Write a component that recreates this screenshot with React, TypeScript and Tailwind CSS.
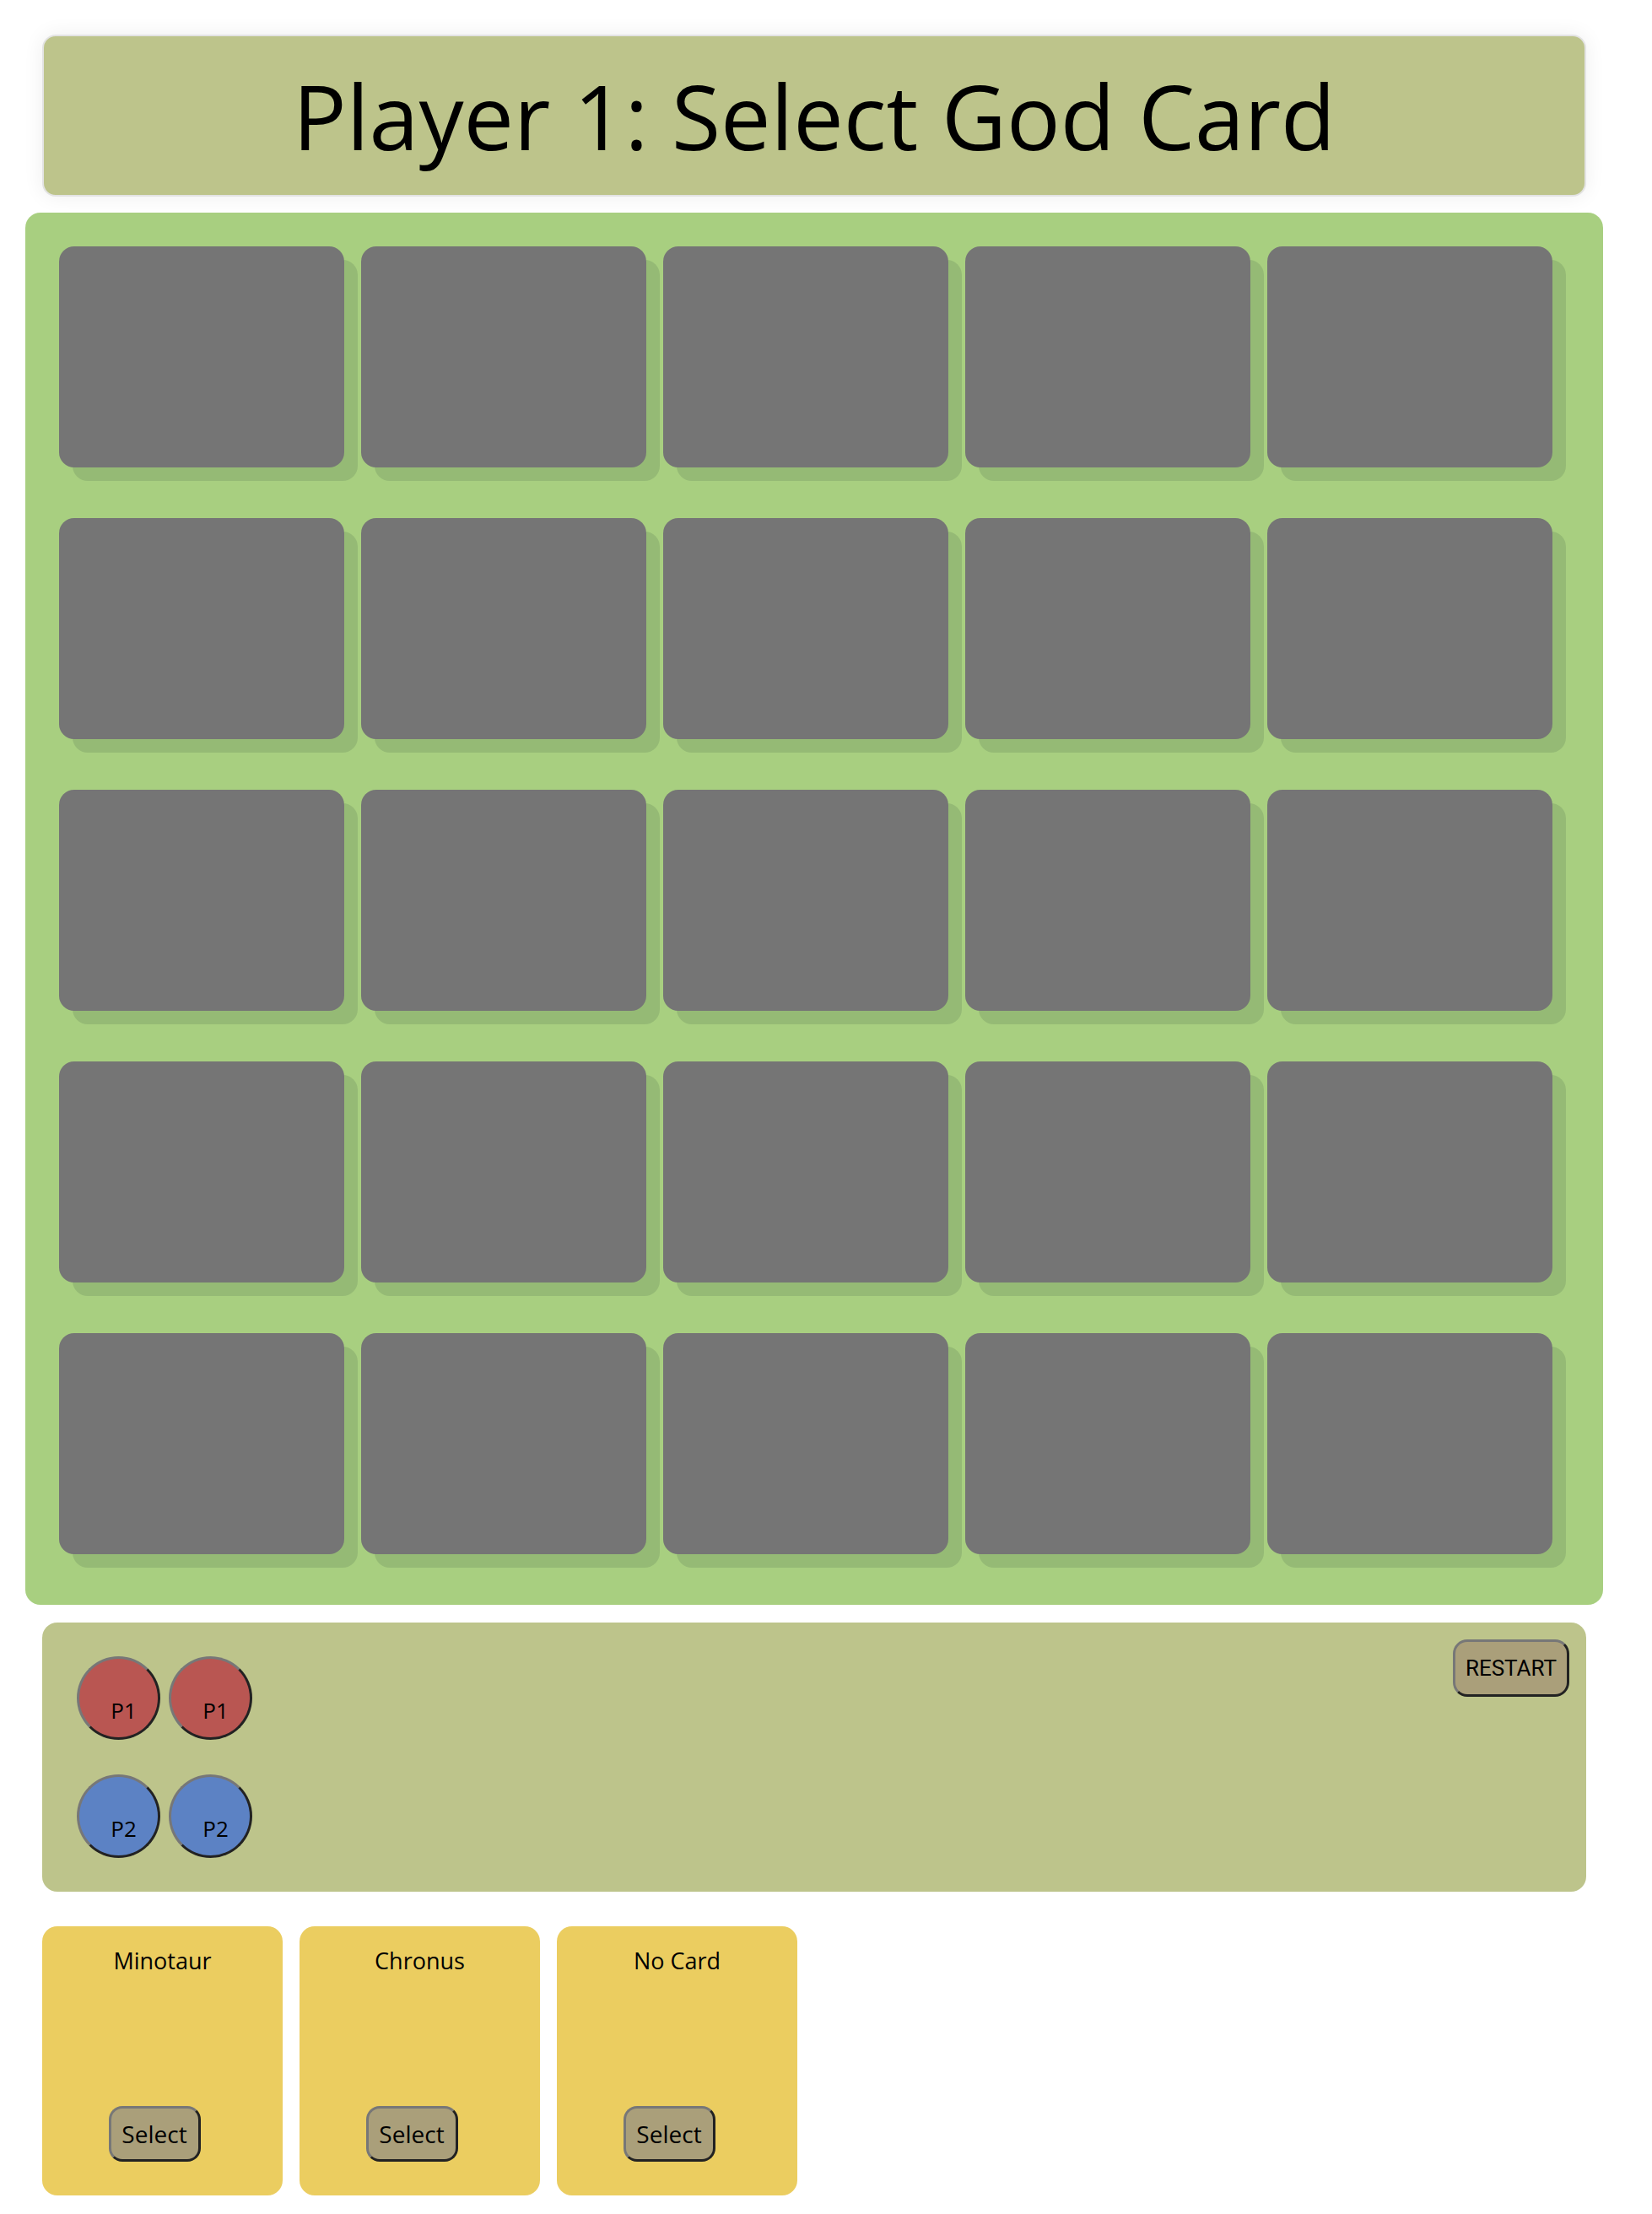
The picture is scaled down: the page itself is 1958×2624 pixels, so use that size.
import React from "react";

const tiles = Array.from({ length: 25 }, (_, i) => i);

function Pawn({ label, color }: { label: string; color: string }) {
  return (
    <div
      className={`w-[99px] h-[99px] rounded-full border-[3px] border-t-[#777777] border-l-[#777777] border-b-[#222222] border-r-[#222222] flex items-center justify-center pl-[12px] pt-[29px] ${color}`}
    >
      <span className="text-[26px] leading-none text-black">{label}</span>
    </div>
  );
}

function GodCard({ name }: { name: string }) {
  return (
    <div className="w-[285px] h-[319px] rounded-[18px] bg-[#ebcd60] flex flex-col items-center justify-between pt-[21px] pb-[40px]">
      <div className="text-[27px] text-black">{name}</div>
      <button className="mr-[19px] w-[109px] h-[66px] rounded-[16px] bg-[#aa9f7a] border-[3px] border-t-[#777777] border-l-[#777777] border-b-[#222222] border-r-[#222222] flex items-center justify-center text-[28px] text-black">
        Select
      </button>
    </div>
  );
}

export default function App() {
  return (
    <div
      className="w-[1930px] min-h-[2624px] bg-white pt-[41px]"
      style={{ fontFamily: '"Open Sans", "Noto Sans", sans-serif' }}
    >
      <header className="mx-[50px] h-[192px] rounded-[16px] bg-[#bdc48b] border-2 border-[#e3e3e3] shadow-[0_0_24px_rgba(0,0,0,0.07)] flex items-center justify-center">
        <h1 className="text-[106px] leading-none text-black">Player 1: Select God Card</h1>
      </header>

      <div className="mx-[30px] mt-[19px] rounded-[18px] bg-[#a8cf80] pt-[40px] pl-[40px] pr-[60px] pb-[60px]">
        <div className="grid grid-cols-[repeat(5,338px)] gap-x-[20px] gap-y-[60px]">
          {tiles.map((i) => (
            <div
              key={i}
              className="h-[262px] rounded-[18px] bg-[#757575] shadow-[16px_16px_0_#95ba75]"
            />
          ))}
        </div>
      </div>

      <div className="relative mx-[50px] mt-[21px] h-[319px] rounded-[18px] bg-[#bdc48b] pt-[40px] pl-[41px] flex flex-col gap-[41px]">
        <div className="flex gap-[10px]">
          <Pawn label="P1" color="bg-[#b95652]" />
          <Pawn label="P1" color="bg-[#b95652]" />
        </div>
        <div className="flex gap-[10px]">
          <Pawn label="P2" color="bg-[#5c82c4]" />
          <Pawn label="P2" color="bg-[#5c82c4]" />
        </div>
        <button
          className="absolute top-[20px] right-[20px] w-[138px] h-[68px] rounded-[17px] bg-[#aa9f7a] border-[3px] border-t-[#777777] border-l-[#777777] border-b-[#222222] border-r-[#222222] flex items-center justify-center text-[26px] text-black"
          style={{ fontFamily: 'Roboto, "Liberation Sans", sans-serif' }}
        >
          RESTART
        </button>
      </div>

      <div className="ml-[50px] mt-[41px] flex gap-[20px]">
        <GodCard name="Minotaur" />
        <GodCard name="Chronus" />
        <GodCard name="No Card" />
      </div>
    </div>
  );
}
